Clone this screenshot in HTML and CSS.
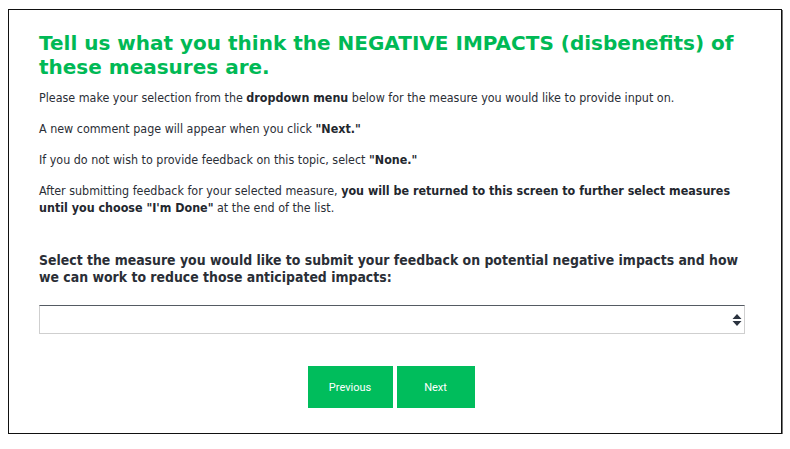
FILE: index.html
```html
<!DOCTYPE html>
<html>
<head>
<meta charset="utf-8">
<link rel="stylesheet" href="styles.css">
</head>
<body>
<div class="card">
  <h1 class="title">Tell us what you think the NEGATIVE IMPACTS (disbenefits) of these measures are.</h1>
  <p class="text">Please make your selection from the <b>dropdown menu</b> below for the measure you would like to provide input on.</p>
  <p class="text">A new comment page will appear when you click <b>"Next."</b></p>
  <p class="text">If you do not wish to provide feedback on this topic, select <b>"None."</b></p>
  <p class="text">After submitting feedback for your selected measure, <b>you will be returned to this screen to further select measures until you choose "I'm Done"</b> at the end of the list.</p>
  <label class="label">Select the measure you would like to submit your feedback on potential negative impacts and how we can work to reduce those anticipated impacts:</label>
  <div class="select">
    <svg class="arrows" width="10" height="14" viewBox="0 0 10 14"><path d="M5 1 L9.5 6 H0.5 Z M5 13 L9.5 8 H0.5 Z" fill="#2b3340"/></svg>
  </div>
  <div class="buttons">
    <button class="btn prev">Previous</button>
    <button class="btn next">Next</button>
  </div>
</div>
</body>
</html>
```
FILE: styles.css
```css
html, body { margin: 0; padding: 0; background: #fff; }
body { padding: 9px 8px 0 8px; }
.card {
  width: 774px;
  height: 425px;
  box-sizing: border-box;
  border: 1px solid #111;
  box-shadow: 1px 1px 0 #777;
  padding: 21px 36px 0 30px;
}
.title {
  margin: 0 0 10px 0;
  font-family: "DejaVu Sans", Verdana, sans-serif;
  font-weight: bold;
  font-size: 20px;
  line-height: 24px;
  color: #00b955;
}
.text {
  margin: 0 0 14px 0;
  font-family: "DejaVu Sans Condensed", "DejaVu Sans", sans-serif;
  font-size: 12.4px;
  line-height: 17px;
  color: #2a2e36;
}
.text b { font-weight: bold; color: #23272e; }
.label {
  display: block;
  margin-top: 36px;
  font-family: "DejaVu Sans Condensed", "DejaVu Sans", sans-serif;
  font-weight: bold;
  font-size: 13.9px;
  line-height: 17px;
  color: #2a2e36;
}
.select {
  margin-top: 19px;
  height: 29px;
  width: 706px;
  box-sizing: border-box;
  border: 1px solid #cfcfcf;
  border-top-color: #555b63;
  display: flex;
  align-items: center;
  justify-content: flex-end;
  padding-right: 2px;
}
.buttons {
  display: flex;
  justify-content: center;
  gap: 4px;
  margin-top: 32px;
  margin-left: -2px;
}
.btn {
  height: 42px;
  border: none;
  background: #00bd5c;
  color: #fff;
  font-family: Roboto, "Open Sans", sans-serif;
  font-size: 11px;
  padding: 0;
}
.prev { width: 85px; }
.next { width: 78px; }
```
